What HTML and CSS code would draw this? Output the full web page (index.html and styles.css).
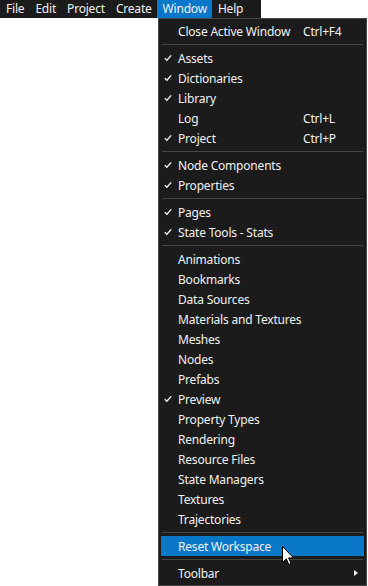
FILE: index.html
```html
<!DOCTYPE html>
<html lang="en">
<head>
  <meta charset="UTF-8" />
  <title>Window menu</title>
  <link rel="stylesheet" href="styles.css">
</head>
<body>
  <nav class="menubar">
    <span class="menubar-item">File</span>
    <span class="menubar-item">Edit</span>
    <span class="menubar-item">Project</span>
    <span class="menubar-item">Create</span>
    <span class="menubar-item open">Window</span>
    <span class="menubar-item">Help</span>
  </nav>

  <div class="dropdown">
    <div class="menu-row"><span class="check"></span><span class="label">Close Active Window</span><span class="shortcut">Ctrl+F4</span></div>
    <div class="separator"></div>
    <div class="menu-row checked"><span class="check"><svg viewBox="0 0 8 8"><polyline points="0.8,4.2 2.9,6.3 7.2,1.4"/></svg></span><span class="label">Assets</span></div>
    <div class="menu-row checked"><span class="check"><svg viewBox="0 0 8 8"><polyline points="0.8,4.2 2.9,6.3 7.2,1.4"/></svg></span><span class="label">Dictionaries</span></div>
    <div class="menu-row checked"><span class="check"><svg viewBox="0 0 8 8"><polyline points="0.8,4.2 2.9,6.3 7.2,1.4"/></svg></span><span class="label">Library</span></div>
    <div class="menu-row"><span class="check"></span><span class="label">Log</span><span class="shortcut">Ctrl+L</span></div>
    <div class="menu-row checked"><span class="check"><svg viewBox="0 0 8 8"><polyline points="0.8,4.2 2.9,6.3 7.2,1.4"/></svg></span><span class="label">Project</span><span class="shortcut">Ctrl+P</span></div>
    <div class="separator"></div>
    <div class="menu-row checked"><span class="check"><svg viewBox="0 0 8 8"><polyline points="0.8,4.2 2.9,6.3 7.2,1.4"/></svg></span><span class="label">Node Components</span></div>
    <div class="menu-row checked"><span class="check"><svg viewBox="0 0 8 8"><polyline points="0.8,4.2 2.9,6.3 7.2,1.4"/></svg></span><span class="label">Properties</span></div>
    <div class="separator"></div>
    <div class="menu-row checked"><span class="check"><svg viewBox="0 0 8 8"><polyline points="0.8,4.2 2.9,6.3 7.2,1.4"/></svg></span><span class="label">Pages</span></div>
    <div class="menu-row checked"><span class="check"><svg viewBox="0 0 8 8"><polyline points="0.8,4.2 2.9,6.3 7.2,1.4"/></svg></span><span class="label">State Tools - Stats</span></div>
    <div class="separator"></div>
    <div class="menu-row"><span class="check"></span><span class="label">Animations</span></div>
    <div class="menu-row"><span class="check"></span><span class="label">Bookmarks</span></div>
    <div class="menu-row"><span class="check"></span><span class="label">Data Sources</span></div>
    <div class="menu-row"><span class="check"></span><span class="label">Materials and Textures</span></div>
    <div class="menu-row"><span class="check"></span><span class="label">Meshes</span></div>
    <div class="menu-row"><span class="check"></span><span class="label">Nodes</span></div>
    <div class="menu-row"><span class="check"></span><span class="label">Prefabs</span></div>
    <div class="menu-row checked"><span class="check"><svg viewBox="0 0 8 8"><polyline points="0.8,4.2 2.9,6.3 7.2,1.4"/></svg></span><span class="label">Preview</span></div>
    <div class="menu-row"><span class="check"></span><span class="label">Property Types</span></div>
    <div class="menu-row"><span class="check"></span><span class="label">Rendering</span></div>
    <div class="menu-row"><span class="check"></span><span class="label">Resource Files</span></div>
    <div class="menu-row"><span class="check"></span><span class="label">State Managers</span></div>
    <div class="menu-row"><span class="check"></span><span class="label">Textures</span></div>
    <div class="menu-row"><span class="check"></span><span class="label">Trajectories</span></div>
    <div class="separator"></div>
    <div class="menu-row hover"><span class="check"></span><span class="label">Reset Workspace</span>
      <svg class="cursor" viewBox="0 0 12 19"><path d="M0.5,0.5 L0.5,16.5 L4.3,12.8 L6.8,18.5 L9.1,17.5 L6.6,11.9 L11.5,11.9 Z"/></svg>
    </div>
    <div class="separator"></div>
    <div class="menu-row"><span class="check"></span><span class="label">Toolbar</span><span class="submenu-arrow"></span></div>
  </div>
</body>
</html>
```

FILE: styles.css
```css
body {
  margin: 0;
  padding: 0;
  background-color: #ffffff;
  font-family: "Segoe UI", "Noto Sans", "Open Sans", sans-serif;
  font-size: 12px;
  letter-spacing: -0.2px;
  color: #f1f1f1;
  overflow: hidden;
}

.menubar {
  display: inline-flex;
  background-color: #1b1b1b;
  height: 18px;
  padding: 0 13px 0 0;
}

.menubar-item {
  line-height: 18px;
  padding: 0 5px 0 6px;
}

.menubar-item.open {
  background-color: #0a78c9;
}

.dropdown {
  position: relative;
  width: 203px;
  margin-left: 158px;
  padding: 2px;
  background-color: #1b1b1b;
  border: 1px solid #464649;
}

.menu-row {
  position: relative;
  display: grid;
  grid-template-columns: 17px 125px 1fr 10px;
  align-items: center;
  height: 20px;
}

.menu-row.hover {
  background-color: #0a78c9;
}

.check {
  display: flex;
  justify-content: flex-start;
  padding-left: 3px;
}

.check svg {
  width: 8px;
  height: 8px;
  fill: none;
  stroke: #f1f1f1;
  stroke-width: 1.4;
}

.label {
  white-space: nowrap;
}

.shortcut {
  white-space: nowrap;
}

.submenu-arrow {
  grid-column: 4;
  width: 0;
  height: 0;
  border-top: 3.5px solid transparent;
  border-bottom: 3.5px solid transparent;
  border-left: 4px solid #f1f1f1;
}

.separator {
  height: 1px;
  margin: 3px 1px;
  background-color: #464649;
}

.cursor {
  position: absolute;
  left: 121px;
  top: 10px;
  width: 12px;
  height: 19px;
  fill: #ffffff;
  stroke: #000000;
  stroke-width: 1;
  z-index: 2;
}
```
